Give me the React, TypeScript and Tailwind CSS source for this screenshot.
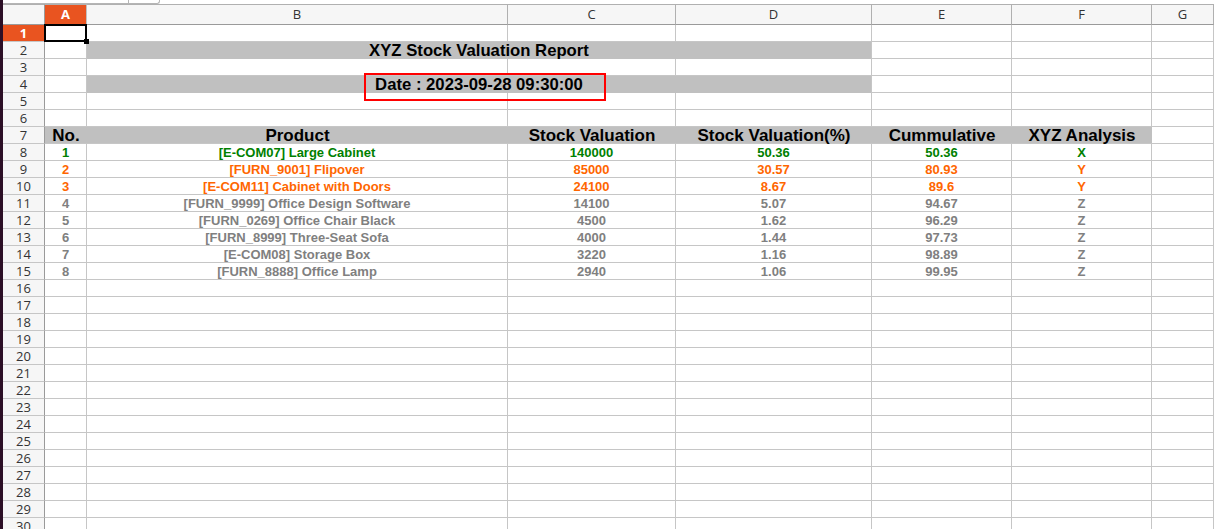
import React from "react";

const COLS = ["A", "B", "C", "D", "E", "F", "G"];

type Row = { no: string; product: string; val: string; pct: string; cum: string; xyz: string; color: string };

const GREEN = "text-[#008000]";
const ORANGE = "text-[#ff6600]";
const GRAY = "text-[#808080]";

const DATA: Row[] = [
  { no: "1", product: "[E-COM07] Large Cabinet", val: "140000", pct: "50.36", cum: "50.36", xyz: "X", color: GREEN },
  { no: "2", product: "[FURN_9001] Flipover", val: "85000", pct: "30.57", cum: "80.93", xyz: "Y", color: ORANGE },
  { no: "3", product: "[E-COM11] Cabinet with Doors", val: "24100", pct: "8.67", cum: "89.6", xyz: "Y", color: ORANGE },
  { no: "4", product: "[FURN_9999] Office Design Software", val: "14100", pct: "5.07", cum: "94.67", xyz: "Z", color: GRAY },
  { no: "5", product: "[FURN_0269] Office Chair Black", val: "4500", pct: "1.62", cum: "96.29", xyz: "Z", color: GRAY },
  { no: "6", product: "[FURN_8999] Three-Seat Sofa", val: "4000", pct: "1.44", cum: "97.73", xyz: "Z", color: GRAY },
  { no: "7", product: "[E-COM08] Storage Box", val: "3220", pct: "1.16", cum: "98.89", xyz: "Z", color: GRAY },
  { no: "8", product: "[FURN_8888] Office Lamp", val: "2940", pct: "1.06", cum: "99.95", xyz: "Z", color: GRAY },
];

const cell = "h-[17px] border-r border-b border-[#c6c6c6] flex items-center justify-center whitespace-nowrap overflow-visible";
const grayCell = "h-[17px] bg-[#c0c0c0] flex items-center justify-center whitespace-nowrap";
const rowHdr =
  "h-[17px] bg-[#f6f6f6] border-r border-b border-r-[#9a9a9a] border-b-[#c6c6c6] flex items-center justify-center text-[13px] text-[#333333] font-['Open_Sans',sans-serif] leading-none";

function RowHeader({ n }: { n: number }) {
  if (n === 1) {
    return (
      <div className="h-[17px] bg-[#e95420] border-r border-b border-r-[#9a9a9a] border-b-[#c6c6c6] flex items-center justify-center text-[13px] font-bold text-white font-['Open_Sans',sans-serif] leading-none">
        1
      </div>
    );
  }
  return <div className={rowHdr}>{n}</div>;
}

function EmptyRow({ n }: { n: number }) {
  return (
    <>
      <RowHeader n={n} />
      {COLS.map((c) => (
        <div key={c} className={cell} />
      ))}
    </>
  );
}

export default function App() {
  const data = "font-['Liberation_Sans',Arial,sans-serif] font-bold text-[13px] leading-none";
  const title = "font-['Liberation_Sans',Arial,sans-serif] font-bold text-[16.7px] leading-none text-black";
  const head = "font-['Liberation_Sans',Arial,sans-serif] font-bold text-[17px] leading-none text-black";
  const rows: React.ReactNode[] = [];

  rows.push(
    <React.Fragment key="r1">
      <RowHeader n={1} />
      <div className="h-[17px] border-r border-b border-[#c6c6c6] relative">
        <div className="absolute -left-px -top-px w-[43px] h-[18px] border-2 border-black" />
        <div className="absolute right-[-3px] bottom-[-3px] w-[5px] h-[5px] bg-black" />
      </div>
      {COLS.slice(1).map((c) => (
        <div key={c} className={cell} />
      ))}
    </React.Fragment>
  );
  rows.push(
    <React.Fragment key="r2">
      <RowHeader n={2} />
      <div className={cell} />
      <div className={`${grayCell} col-span-3 border-r border-[#c6c6c6] ${title}`}>
        <span className="translate-y-[1px]">XYZ Stock Valuation Report</span>
      </div>
      <div className={cell} />
      <div className={cell} />
      <div className={cell} />
    </React.Fragment>
  );
  rows.push(<EmptyRow key="r3" n={3} />);
  rows.push(
    <React.Fragment key="r4">
      <RowHeader n={4} />
      <div className={cell} />
      <div className={`${grayCell} col-span-3 border-r border-[#c6c6c6] ${title}`}>
        <span className="translate-y-[1px]">Date : 2023-09-28 09:30:00</span>
      </div>
      <div className={cell} />
      <div className={cell} />
      <div className={cell} />
    </React.Fragment>
  );
  rows.push(<EmptyRow key="r5" n={5} />);
  rows.push(<EmptyRow key="r6" n={6} />);
  const headers = ["No.", "Product", "Stock Valuation", "Stock Valuation(%)", "Cummulative", "XYZ Analysis"];
  rows.push(
    <React.Fragment key="r7">
      <RowHeader n={7} />
      {headers.map((h) => (
        <div key={h} className={`${grayCell} border-b border-[#c6c6c6] ${head}`}>
          {h}
        </div>
      ))}
      <div className={cell} />
    </React.Fragment>
  );
  DATA.forEach((d, i) => {
    rows.push(
      <React.Fragment key={`d${i}`}>
        <RowHeader n={8 + i} />
        <div className={`${cell} ${data} ${d.color}`}>{d.no}</div>
        <div className={`${cell} ${data} ${d.color}`}>{d.product}</div>
        <div className={`${cell} ${data} ${d.color}`}>{d.val}</div>
        <div className={`${cell} ${data} ${d.color}`}>{d.pct}</div>
        <div className={`${cell} ${data} ${d.color}`}>{d.cum}</div>
        <div className={`${cell} ${data} ${d.color}`}>{d.xyz}</div>
        <div className={cell} />
      </React.Fragment>
    );
  });
  for (let n = 16; n <= 31; n++) rows.push(<EmptyRow key={`e${n}`} n={n} />);

  return (
    <div className="w-[1214px] h-[529px] overflow-hidden bg-white flex">
      <div className="w-[3px] h-full bg-[#2c0f26] shrink-0" />
      <div className="flex-1 flex flex-col min-w-0">
        <div className="h-[4px] bg-white relative shrink-0">
          <div className="absolute left-0 top-0 w-[157px] h-[4px] border-r border-b border-[#b5b5b5] rounded-br-[3px]" />
          <div className="absolute left-[125px] top-0 w-px h-[4px] bg-[#b5b5b5]" />
        </div>
        <div className="relative">
          <div className="grid grid-cols-[42px_42px_421px_168px_196px_140px_140px_1fr]">
            <div className="h-[21px] bg-[#f6f6f6] border-t border-b border-r border-t-[#b0b0b0] border-b-[#9a9a9a] border-r-[#9a9a9a]" />
            {COLS.map((c) => (
              <div
                key={c}
                className={
                  c === "A"
                    ? "h-[21px] bg-[#e95420] border-t border-b border-r border-t-[#b0b0b0] border-b-[#9a9a9a] border-r-[#c0c0c0] flex items-center justify-center text-[13px] font-bold text-white font-['Open_Sans',sans-serif] leading-none"
                    : "h-[21px] bg-[#f6f6f6] border-t border-b border-r border-t-[#b0b0b0] border-b-[#9a9a9a] border-r-[#b0b0b0] flex items-center justify-center text-[13px] text-[#333333] font-['Open_Sans',sans-serif] leading-none"
                }
              >
                {c}
              </div>
            ))}
            {rows}
          </div>
          <div className="absolute left-[361px] top-[69px] w-[242px] h-[28px] border-2 border-[#ff0000]" />
        </div>
      </div>
    </div>
  );
}
